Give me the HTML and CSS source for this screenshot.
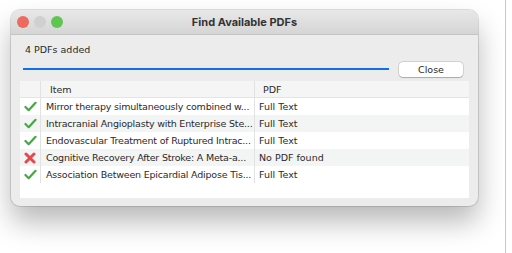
FILE: index.html
```html
<!DOCTYPE html>
<html>
<head>
    <title>Find Available PDFs</title>
    <link rel="stylesheet" href="styles.css">
</head>
<body>
    <div class="desktop">
        <div class="window">
            <div class="titlebar">
                <div class="lights">
                    <span class="light close-light"></span>
                    <span class="light min-light"></span>
                    <span class="light max-light"></span>
                </div>
                <div class="title">Find Available PDFs</div>
            </div>
            <div class="content">
                <div class="status">4 PDFs added</div>
                <div class="progress-row">
                    <div class="progress"></div>
                    <button class="close-button">Close</button>
                </div>
                <div class="table">
                    <div class="row header">
                        <div class="cell icon"></div>
                        <div class="cell item">Item</div>
                        <div class="cell pdf">PDF</div>
                    </div>
                    <div class="row">
                        <div class="cell icon"><svg class="ok" viewBox="0 0 14 12"><path d="M1.5 6.5 L5 10 L12.5 2"/></svg></div>
                        <div class="cell item">Mirror therapy simultaneously combined w...</div>
                        <div class="cell pdf">Full Text</div>
                    </div>
                    <div class="row odd">
                        <div class="cell icon"><svg class="ok" viewBox="0 0 14 12"><path d="M1.5 6.5 L5 10 L12.5 2"/></svg></div>
                        <div class="cell item">Intracranial Angioplasty with Enterprise Ste...</div>
                        <div class="cell pdf">Full Text</div>
                    </div>
                    <div class="row">
                        <div class="cell icon"><svg class="ok" viewBox="0 0 14 12"><path d="M1.5 6.5 L5 10 L12.5 2"/></svg></div>
                        <div class="cell item">Endovascular Treatment of Ruptured Intrac...</div>
                        <div class="cell pdf">Full Text</div>
                    </div>
                    <div class="row odd">
                        <div class="cell icon"><svg class="fail" viewBox="0 0 12 12"><path d="M2 2 L10 10 M10 2 L2 10"/></svg></div>
                        <div class="cell item">Cognitive Recovery After Stroke: A Meta-a...</div>
                        <div class="cell pdf">No PDF found</div>
                    </div>
                    <div class="row">
                        <div class="cell icon"><svg class="ok" viewBox="0 0 14 12"><path d="M1.5 6.5 L5 10 L12.5 2"/></svg></div>
                        <div class="cell item">Association Between Epicardial Adipose Tis...</div>
                        <div class="cell pdf">Full Text</div>
                    </div>
                </div>
            </div>
        </div>
    </div>
</body>
</html>
```
FILE: styles.css
```css
html, body {
    margin: 0;
    padding: 0;
    background: #ffffff;
}

body {
    font-family: 'DejaVu Sans', Verdana, sans-serif;
    font-size: 9.5px;
    color: #2a2a2a;
}

.desktop {
    width: 506px;
    height: 253px;
    border-right: 1px solid #c9c9c9;
    padding: 10px 0 0 11px;
    box-sizing: border-box;
}

.window {
    width: 467px;
    height: 196px;
    background: #ececec;
    border-radius: 9px;
    box-shadow: 0 0 0 1px rgba(0,0,0,0.12), 0 16px 28px rgba(0,0,0,0.28);
    overflow: hidden;
    display: flex;
    flex-direction: column;
}

.titlebar {
    height: 25px;
    flex-shrink: 0;
    background: linear-gradient(#e8e8e8, #d5d5d5);
    border-bottom: 1px solid #c4c4c4;
    box-sizing: border-box;
    display: flex;
    align-items: center;
    position: relative;
}

.lights {
    display: flex;
    gap: 5px;
    padding-left: 6px;
}

.light {
    width: 12px;
    height: 12px;
    border-radius: 50%;
}

.close-light { background: #ed6a5e; }
.min-light { background: #d0d0d0; }
.max-light { background: #61c554; }

.title {
    position: absolute;
    left: 0;
    right: 0;
    text-align: center;
    font-family: Inter, 'Liberation Sans', sans-serif;
    font-weight: 700;
    font-size: 11px;
    color: #333;
}

.content {
    padding: 4px 9px 8px 9px;
    display: flex;
    flex-direction: column;
    flex: 1;
}

.status {
    height: 22px;
    line-height: 22px;
    padding-left: 5px;
}

.progress-row {
    display: flex;
    align-items: center;
    height: 16px;
    margin-bottom: 4px;
}

.progress {
    margin-left: 3px;
    width: 366px;
    height: 2.5px;
    background: #0f70e8;
}

.close-button {
    margin-left: 10px;
    width: 64px;
    height: 15px;
    padding: 0;
    border: none;
    border-radius: 4px;
    background: #ffffff;
    box-shadow: 0 0 0 0.5px rgba(0,0,0,0.2), 0 0.5px 1px rgba(0,0,0,0.2);
    font-family: 'DejaVu Sans', Verdana, sans-serif;
    font-size: 9.5px;
    color: #2a2a2a;
}

.table {
    flex: 1;
    background: #ffffff;
}

.row {
    display: flex;
    height: 17px;
    align-items: center;
}

.row.odd {
    background: #f3f4f4;
}

.row.header {
    background: #f5f5f5;
    border-bottom: 1px solid #e4e4e4;
    box-sizing: border-box;
}

.cell {
    height: 100%;
    display: flex;
    align-items: center;
    box-sizing: border-box;
    white-space: nowrap;
}

.cell.icon {
    width: 21px;
    justify-content: center;
    border-right: 1px solid #e2e2e2;
}

.cell.item {
    width: 214px;
    padding-left: 5px;
    border-right: 1px solid #e2e2e2;
    letter-spacing: -0.2px;
}

.cell.pdf {
    flex: 1;
    padding-left: 4px;
}

.header .cell.item {
    padding-left: 9px;
    letter-spacing: 0;
}

.header .cell.pdf {
    padding-left: 8px;
}

svg.ok, svg.fail {
    width: 13px;
    height: 11px;
    fill: none;
    stroke-linecap: round;
    stroke-linejoin: round;
}

svg.ok {
    stroke: #45a845;
    stroke-width: 2.4;
}

svg.fail {
    width: 12px;
    height: 12px;
    stroke: #e5484d;
    stroke-width: 3;
}
```
